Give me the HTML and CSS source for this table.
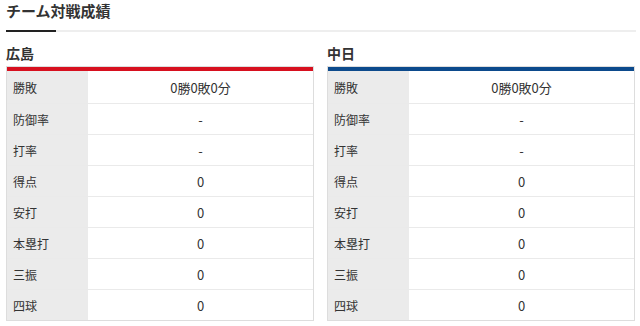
FILE: index.html
```html
<!DOCTYPE html>
<html lang="ja">
<head>
<meta charset="utf-8">
<link rel="stylesheet" href="styles.css">
</head>
<body>
<div class="wrap">
  <h2 class="title"><span class="title-text">チーム対戦成績</span></h2>
  <div class="teams">
    <section class="team">
      <h3 class="team-name">広島</h3>
      <table class="stats carp">
        <tr><th>勝敗</th><td>0勝0敗0分</td></tr>
        <tr><th>防御率</th><td>-</td></tr>
        <tr><th>打率</th><td>-</td></tr>
        <tr><th>得点</th><td>0</td></tr>
        <tr><th>安打</th><td>0</td></tr>
        <tr><th>本塁打</th><td>0</td></tr>
        <tr><th>三振</th><td>0</td></tr>
        <tr><th>四球</th><td>0</td></tr>
      </table>
    </section>
    <section class="team">
      <h3 class="team-name">中日</h3>
      <table class="stats dragons">
        <tr><th>勝敗</th><td>0勝0敗0分</td></tr>
        <tr><th>防御率</th><td>-</td></tr>
        <tr><th>打率</th><td>-</td></tr>
        <tr><th>得点</th><td>0</td></tr>
        <tr><th>安打</th><td>0</td></tr>
        <tr><th>本塁打</th><td>0</td></tr>
        <tr><th>三振</th><td>0</td></tr>
        <tr><th>四球</th><td>0</td></tr>
      </table>
    </section>
  </div>
</div>
</body>
</html>
```
FILE: styles.css
```css
html, body {
  margin: 0;
  padding: 0;
  background: #fff;
}
body {
  font-family: "Noto Sans CJK JP", "Noto Sans", sans-serif;
  color: #333;
}
.wrap {
  width: 630px;
  margin-left: 6px;
}
.title {
  margin: 0;
  font-size: 15px;
  font-weight: bold;
  line-height: 22px;
  border-bottom: 2px solid #eeeeee;
  color: #333;
}
.title-text {
  display: inline-block;
  width: 50px;
  white-space: nowrap;
  padding-bottom: 8px;
  border-bottom: 2px solid #222;
  margin-bottom: -2px;
  vertical-align: top;
}
.teams {
  display: grid;
  grid-template-columns: 308px 308px;
  column-gap: 13px;
  margin-top: 11px;
}
.team-name {
  margin: 0 0 3px;
  font-size: 14px;
  font-weight: bold;
  line-height: 20px;
  color: #333;
}
.stats {
  width: 100%;
  border-collapse: separate;
  border-spacing: 0;
  border: 1px solid #dddddd;
  font-size: 13px;
}
.stats th,
.stats td {
  height: 30px;
  padding: 0;
  border-top: 1px solid #eaeaea;
  font-weight: normal;
}
.stats tr:first-child th,
.stats tr:first-child td {
  height: 32px;
  border-top: 4px solid #d7101f;
}
.stats.dragons tr:first-child th,
.stats.dragons tr:first-child td {
  border-top-color: #0c4a8c;
}
.stats th {
  width: 81px;
  background: #ebebeb;
  text-align: left;
  padding-left: 6px;
  box-sizing: border-box;
  font-size: 12px;
}
.stats td {
  text-align: center;
  background: #fff;
}
```
